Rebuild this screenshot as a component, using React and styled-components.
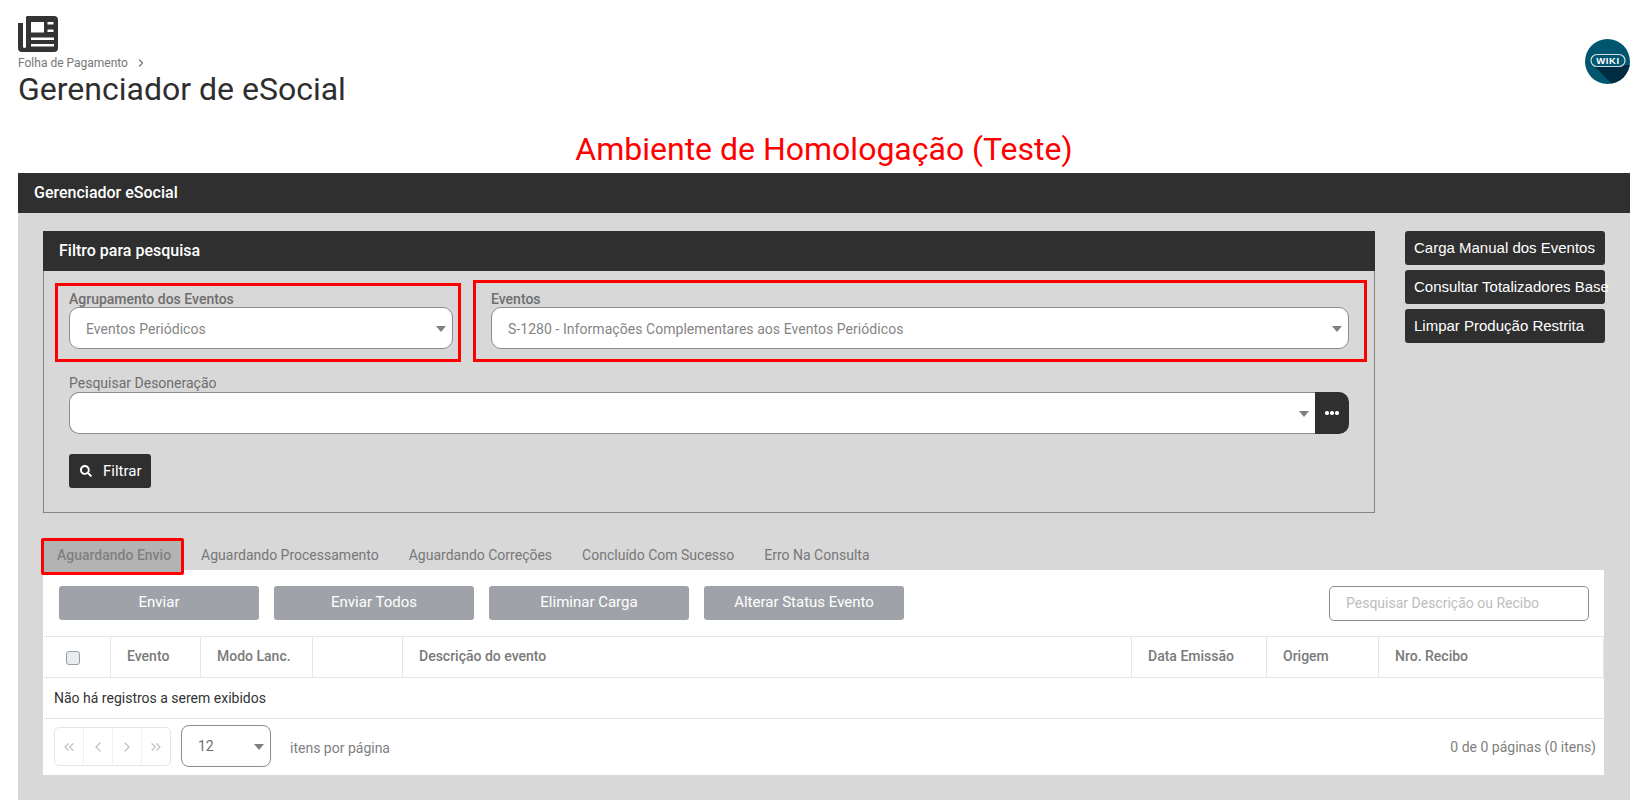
import React from "react";
import styled, { createGlobalStyle } from "styled-components";
import { FaSearch } from "react-icons/fa";
import { FiChevronLeft, FiChevronRight, FiChevronsLeft, FiChevronsRight } from "react-icons/fi";

const GlobalStyle = createGlobalStyle`
  html, body { margin: 0; padding: 0; background: #fff; }
  body { font-family: Roboto, "Liberation Sans", sans-serif; overflow: hidden; }
  * { box-sizing: border-box; }
`;

const Page = styled.div`
  width: 1644px;
  height: 807px;
  padding: 16px 14px 0 18px;
  background: #fff;
`;

const TopBar = styled.header`
  display: flex;
  justify-content: space-between;
  height: 107px;
`;

const Crumb = styled.div`
  display: flex;
  align-items: center;
  gap: 7px;
  margin-top: 4px;
  height: 14px;
  font-size: 12px;
  color: #777;
`;

const Title = styled.h1`
  margin: 0;
  font-size: 32px;
  font-weight: 400;
  line-height: 38px;
  color: #2e2e2e;
`;

const Wiki = styled.svg`
  width: 45px;
  height: 45px;
  margin-top: 23px;
`;

const Ambiente = styled.div`
  text-align: center;
  height: 50px;
  font-size: 32px;
  line-height: 52px;
  color: #f00;
`;

const MainHead = styled.div`
  height: 40px;
  padding-left: 16px;
  background: #2f2f2f;
  color: #fff;
  font-size: 16px;
  font-weight: 500;
  line-height: 40px;
`;

const MainBody = styled.div`
  height: 587px;
  padding: 18px 25px 0;
  background: #d8d8d8;
`;

const TopRow = styled.div`
  display: flex;
  justify-content: space-between;
  align-items: flex-start;
`;

const FilterPanel = styled.section`
  width: 1332px;
  height: 282px;
  border: 1px solid #858585;
  border-top: 0;
`;

const FilterHead = styled.div`
  height: 40px;
  margin: 0 -1px;
  padding-left: 16px;
  background: #2f2f2f;
  color: #fff;
  font-size: 16px;
  font-weight: 500;
  line-height: 40px;
`;

const FieldsRow = styled.div`
  display: flex;
  align-items: flex-end;
  gap: 12px;
  margin: 9px 0 0 11px;
`;

const Highlight = styled.div`
  width: ${(p) => p.$width}px;
  height: ${(p) => p.$height}px;
  padding: 0 ${(p) => p.$right}px 10px ${(p) => p.$left}px;
  border: 3px solid #f00;
  display: flex;
  flex-direction: column;
  justify-content: flex-end;
`;

const Label = styled.div`
  height: 15px;
  font-size: 14px;
  line-height: ${(p) => (p.$strong ? 15 : 13)}px;
  font-weight: ${(p) => (p.$strong ? 500 : 400)};
  color: #6e6e6e;
`;

const SelectBox = styled.div`
  position: relative;
  height: 42px;
  padding-left: 16px;
  background: #fff;
  border: 1px solid #8c8c8c;
  border-radius: 10px;
  color: #858585;
  font-size: 14px;
  letter-spacing: 0.05px;
  line-height: 42px;
`;

const Caret = styled.span`
  position: absolute;
  right: 6px;
  top: 18px;
  width: 0;
  height: 0;
  border-left: 5.5px solid transparent;
  border-right: 5.5px solid transparent;
  border-top: 6px solid #808080;
`;

const SearchField = styled.div`
  margin: 15px 25px 0 25px;
`;

const ComboRow = styled.div`
  display: flex;
  height: 42px;
`;

const ComboInput = styled.div`
  position: relative;
  flex: 1;
  background: #fff;
  border: 1px solid #8c8c8c;
  border-right: 0;
  border-radius: 10px 0 0 10px;
`;

const DotsButton = styled.div`
  width: 34px;
  background: #2f2f2f;
  border-radius: 0 10px 10px 0;
  display: flex;
  align-items: center;
  justify-content: center;
  gap: 1.5px;
`;

const Dot = styled.i`
  width: 3.5px;
  height: 3.5px;
  border-radius: 50%;
  background: #fff;
`;

const FilterButton = styled.div`
  display: flex;
  align-items: center;
  gap: 11px;
  width: 82px;
  height: 34px;
  margin: 20px 0 0 25px;
  padding-left: 11px;
  background: #2f2f2f;
  border-radius: 3px;
  color: #fff;
  font-size: 15px;
`;

const SideActions = styled.div`
  display: flex;
  flex-direction: column;
  gap: 5px;
  width: 200px;
`;

const SideButton = styled.div`
  height: 34px;
  padding-left: 9px;
  background: #2f2f2f;
  border-radius: 3px;
  color: #fff;
  font-family: "Liberation Sans", Arial, sans-serif;
  font-size: 15px;
  line-height: 34px;
  white-space: nowrap;
`;

const Tabs = styled.div`
  display: flex;
  height: 32px;
  margin: 25px 0 0 -2px;
`;

const Tab = styled.div`
  position: relative;
  z-index: 1;
  height: ${(p) => (p.$active ? 37 : 32)}px;
  margin-right: ${(p) => (p.$active ? 1 : 0)}px;
  padding: 0 ${(p) => (p.$active ? 10 : 14)}px 0 ${(p) => (p.$active ? 13 : 16)}px;
  background: ${(p) => (p.$active ? "#b3b3b3" : "transparent")};
  border: ${(p) => (p.$active ? "3px solid #f00" : "0")};
  border-radius: 2px;
  color: ${(p) => (p.$active ? "#808080" : "#777")};
  font-size: 14px;
  font-weight: ${(p) => (p.$active ? 500 : 400)};
  line-height: ${(p) => (p.$active ? 28 : 34)}px;
  white-space: nowrap;
`;

const WhitePanel = styled.section`
  width: 1561px;
  height: 205px;
  background: #fff;
`;

const Toolbar = styled.div`
  display: flex;
  align-items: center;
  gap: 15px;
  height: 66px;
  padding: 0 15px 0 16px;
`;

const GrayButton = styled.div`
  width: 200px;
  height: 34px;
  background: #9fa3a9;
  border-radius: 3px;
  color: #fff;
  font-size: 15px;
  line-height: 33px;
  text-align: center;
`;

const SearchInput = styled.div`
  width: 260px;
  height: 35px;
  margin-left: auto;
  padding-left: 16px;
  border: 1px solid #8c8c8c;
  border-radius: 5px;
  color: #bdbdbd;
  font-size: 14px;
  line-height: 33px;
`;

const HeadRow = styled.div`
  display: grid;
  grid-template-columns: 67px 90px 112px 90px 729px 135px 112px 225px;
  height: 42px;
  margin-left: 1px;
  border-top: 1px solid #e3e5e8;
  border-bottom: 1px solid #e3e5e8;
`;

const HeadCell = styled.div`
  display: flex;
  align-items: center;
  padding: 0 0 2px 16px;
  border-right: 1px solid #e3e5e8;
  color: #7a7a7a;
  font-size: 14px;
  font-weight: 500;
`;

const Check = styled.span`
  width: 14px;
  height: 14px;
  margin: 4px 0 0 6px;
  background: #e9ecef;
  border: 1px solid #9a9da2;
  border-radius: 3px;
`;

const EmptyRow = styled.div`
  height: 41px;
  margin-left: 1px;
  padding-left: 10px;
  border-bottom: 1px solid #e3e5e8;
  color: #333;
  font-size: 14px;
  line-height: 40px;
`;

const Footer = styled.div`
  display: flex;
  align-items: center;
  height: 57px;
  padding: 0 8px 2px 11px;
  color: #808080;
  font-size: 14px;
`;

const Pager = styled.div`
  display: flex;
  width: 117px;
  height: 39px;
  border: 1px solid #e3e5e8;
  border-radius: 5px;
`;

const PagerCell = styled.div`
  flex: 1;
  display: flex;
  align-items: center;
  justify-content: center;
  color: #c4c4c4;
  font-size: 16px;
  & + & { border-left: 1px solid #eef0f2; }
`;

const PageSize = styled.div`
  position: relative;
  width: 90px;
  height: 42px;
  margin: -2px 19px 0 10px;
  padding-left: 16px;
  border: 1px solid #8c8c8c;
  border-radius: 8px;
  color: #6e6e6e;
  font-size: 14px;
  line-height: 40px;
`;

const PerPage = styled.span`
  margin-top: 2px;
`;

const PageCount = styled.div`
  margin-left: auto;
`;

const NewspaperIcon = () => (
  <svg width="40" height="36" viewBox="0 0 40 36" style={{ display: "block" }}>
    <path
      fillRule="evenodd"
      fill="#333"
      d="M9 0h27a4 4 0 0 1 4 4v28a4 4 0 0 1-4 4H4a4 4 0 0 1-4-4V7h5v24a1.6 1.6 0 0 0 3 0V1zM13 6v10.500h13V6zM29.500 6v2.500h6V6zM29.500 13.500v2.500h6v-2.500zM13 21.500v2.500h23v-2.500zM13 28v2.500h23V28z"
    />
  </svg>
);

const WikiLogo = () => (
  <Wiki viewBox="0 0 45 45">
    <defs>
      <clipPath id="disc">
        <circle cx="22.5" cy="22.5" r="22.5" />
      </clipPath>
    </defs>
    <circle cx="22.5" cy="22.5" r="22.5" fill="#00566f" />
    <path clipPath="url(#disc)" d="M8 26h37v19H27z" fill="#002c42" />
    <rect x="6" y="15.500" width="34" height="12" rx="6" fill="#00566f" stroke="#cfdde2" strokeWidth="1.2" />
    <text x="23" y="25" textAnchor="middle" fill="#fff" fontSize="9.500" letterSpacing="0.6" fontWeight="700" fontFamily="Liberation Sans">
      WIKI
    </text>
  </Wiki>
);

export default function App() {
  return (
    <>
      <GlobalStyle />
      <Page>
        <TopBar>
          <div>
            <NewspaperIcon />
            <Crumb>
              Folha de Pagamento
              <FiChevronRight size={12} strokeWidth={2.5} />
            </Crumb>
            <Title>Gerenciador de eSocial</Title>
          </div>
          <WikiLogo />
        </TopBar>
        <Ambiente>Ambiente de Homologação (Teste)</Ambiente>
        <MainHead>Gerenciador eSocial</MainHead>
        <MainBody>
          <TopRow>
            <FilterPanel>
              <FilterHead>Filtro para pesquisa</FilterHead>
              <FieldsRow>
                <Highlight $width={406} $height={79} $left={11} $right={5}>
                  <Label $strong>Agrupamento dos Eventos</Label>
                  <SelectBox>
                    Eventos Periódicos
                    <Caret />
                  </SelectBox>
                </Highlight>
                <Highlight $width={894} $height={82} $left={15} $right={15}>
                  <Label $strong>Eventos</Label>
                  <SelectBox>
                    S-1280 - Informações Complementares aos Eventos Periódicos
                    <Caret />
                  </SelectBox>
                </Highlight>
              </FieldsRow>
              <SearchField>
                <Label>Pesquisar Desoneração</Label>
                <ComboRow>
                  <ComboInput>
                    <Caret />
                  </ComboInput>
                  <DotsButton>
                    <Dot />
                    <Dot />
                    <Dot />
                  </DotsButton>
                </ComboRow>
              </SearchField>
              <FilterButton>
                <FaSearch size={12} />
                Filtrar
              </FilterButton>
            </FilterPanel>
            <SideActions>
              <SideButton>Carga Manual dos Eventos</SideButton>
              <SideButton>Consultar Totalizadores Base</SideButton>
              <SideButton>Limpar Produção Restrita</SideButton>
            </SideActions>
          </TopRow>
          <Tabs>
            <Tab $active>Aguardando Envio</Tab>
            <Tab>Aguardando Processamento</Tab>
            <Tab>Aguardando Correções</Tab>
            <Tab>Concluído Com Sucesso</Tab>
            <Tab>Erro Na Consulta</Tab>
          </Tabs>
          <WhitePanel>
            <Toolbar>
              <GrayButton>Enviar</GrayButton>
              <GrayButton>Enviar Todos</GrayButton>
              <GrayButton>Eliminar Carga</GrayButton>
              <GrayButton>Alterar Status Evento</GrayButton>
              <SearchInput>Pesquisar Descrição ou Recibo</SearchInput>
            </Toolbar>
            <HeadRow>
              <HeadCell>
                <Check />
              </HeadCell>
              <HeadCell>Evento</HeadCell>
              <HeadCell>Modo Lanc.</HeadCell>
              <HeadCell />
              <HeadCell>Descrição do evento</HeadCell>
              <HeadCell>Data Emissão</HeadCell>
              <HeadCell>Origem</HeadCell>
              <HeadCell>Nro. Recibo</HeadCell>
            </HeadRow>
            <EmptyRow>Não há registros a serem exibidos</EmptyRow>
            <Footer>
              <Pager>
                <PagerCell>
                  <FiChevronsLeft />
                </PagerCell>
                <PagerCell>
                  <FiChevronLeft />
                </PagerCell>
                <PagerCell>
                  <FiChevronRight />
                </PagerCell>
                <PagerCell>
                  <FiChevronsRight />
                </PagerCell>
              </Pager>
              <PageSize>
                12
                <Caret />
              </PageSize>
              <PerPage>itens por página</PerPage>
              <PageCount>0 de 0 páginas (0 itens)</PageCount>
            </Footer>
          </WhitePanel>
        </MainBody>
      </Page>
    </>
  );
}
